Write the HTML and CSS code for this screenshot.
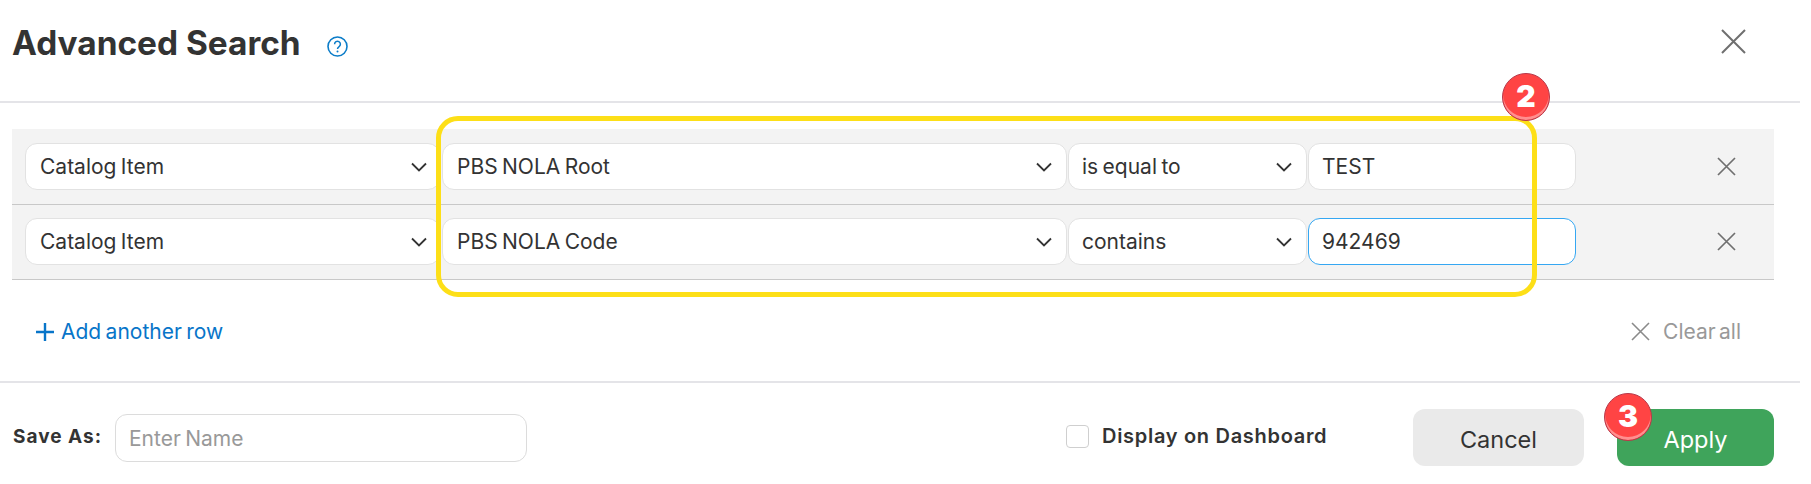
FILE: index.html
```html
<!DOCTYPE html>
<html>

<head>
  <title>Advanced Search</title>
  <link rel="stylesheet" href="styles.css">
</head>

<body>
  <div class="modal">
    <div class="header">
      <h1 class="title">Advanced Search</h1>
      <svg class="help-icon" viewBox="0 0 21 21" width="21" height="21">
        <circle cx="10.5" cy="10.5" r="9.5" fill="none" stroke="#0b7cc8" stroke-width="1.6" />
        <path d="M7.6 8.2a2.9 2.9 0 1 1 4.5 2.4c-1 .7-1.6 1.2-1.6 2.4" fill="none" stroke="#0b7cc8" stroke-width="1.5" />
        <circle cx="10.5" cy="15.6" r="1" fill="#0b7cc8" />
      </svg>
      <svg class="close-icon" viewBox="0 0 25 25" width="25" height="25">
        <path d="M1 1l23 23M24 1L1 24" stroke="#6f6f6f" stroke-width="2" fill="none" />
      </svg>
    </div>

    <div class="rows">
      <div class="row">
        <div class="select">Catalog Item
          <svg class="chevron" viewBox="0 0 16 10" width="16" height="10"><path d="M1 1.5l7 7 7-7" /></svg>
        </div>
        <div class="select">PBS NOLA Root
          <svg class="chevron" viewBox="0 0 16 10" width="16" height="10"><path d="M1 1.5l7 7 7-7" /></svg>
        </div>
        <div class="select">is equal to
          <svg class="chevron" viewBox="0 0 16 10" width="16" height="10"><path d="M1 1.5l7 7 7-7" /></svg>
        </div>
        <input class="value" type="text" value="TEST">
        <svg class="remove" viewBox="0 0 19 19" width="19" height="19"><path d="M1 1l17 17M18 1L1 18" /></svg>
      </div>
      <div class="row">
        <div class="select">Catalog Item
          <svg class="chevron" viewBox="0 0 16 10" width="16" height="10"><path d="M1 1.5l7 7 7-7" /></svg>
        </div>
        <div class="select">PBS NOLA Code
          <svg class="chevron" viewBox="0 0 16 10" width="16" height="10"><path d="M1 1.5l7 7 7-7" /></svg>
        </div>
        <div class="select">contains
          <svg class="chevron" viewBox="0 0 16 10" width="16" height="10"><path d="M1 1.5l7 7 7-7" /></svg>
        </div>
        <input class="value focused" type="text" value="942469">
        <svg class="remove" viewBox="0 0 19 19" width="19" height="19"><path d="M1 1l17 17M18 1L1 18" /></svg>
      </div>
    </div>

    <div class="row-actions">
      <a class="add-row" href="#">
        <svg viewBox="0 0 18 18" width="18" height="18"><path d="M9 0v18M0 9h18" stroke="#0875c9" stroke-width="2.4" /></svg>
        Add another row
      </a>
      <a class="clear-all" href="#">
        <svg viewBox="0 0 19 19" width="19" height="19"><path d="M1 1l17 17M18 1L1 18" stroke="#8a8a8a" stroke-width="1.6" /></svg>
        Clear all
      </a>
    </div>

    <div class="footer">
      <label class="save-label" for="saveName">Save As:</label>
      <input class="save-input" id="saveName" type="text" placeholder="Enter Name">
      <div class="dashboard-check">
        <span class="checkbox"></span>
        <span>Display on Dashboard</span>
      </div>
      <button class="btn btn-cancel">Cancel</button>
      <button class="btn btn-apply">Apply</button>
    </div>
  </div>

  <div class="highlight"></div>
  <div class="badge badge-2">2</div>
  <div class="badge badge-3">3</div>
</body>

</html>
```

FILE: styles.css
```css
* {
  box-sizing: border-box;
}

body {
  margin: 0;
  background-color: #ffffff;
  color: #333333;
  font-family: "Inter", "Liberation Sans", sans-serif;
  overflow: hidden;
}

.modal {
  width: 1800px;
  height: 484px;
}

.header {
  height: 103px;
  display: flex;
  align-items: center;
  padding: 0 54px 18px 12px;
  border-bottom: 2px solid #e4e4e8;
}

.title {
  margin: 2px 0 0 0;
  font-size: 33.4px;
  font-weight: 700;
  color: #333333;
}

.help-icon {
  margin: 10px 0 0 26px;
}

.close-icon {
  margin-left: auto;
}

.rows {
  margin: 26px 0 0 12px;
  width: 1762px;
}

.row {
  height: 75px;
  display: flex;
  align-items: flex-start;
  padding: 13px 0 0 13px;
  gap: 2px;
  background-color: #f3f3f3;
  border-bottom: 1px solid #c8c8c8;
}

.row:first-child {
  height: 76px;
  padding-top: 14px;
}

.select,
.value {
  height: 47px;
  background-color: #ffffff;
  border: 1px solid #e2e2e2;
  border-radius: 12px;
  font-family: inherit;
  font-size: 21px;
  word-spacing: -1.5px;
  color: #333333;
}

.select {
  display: flex;
  align-items: center;
  justify-content: space-between;
  padding: 0 14px 0 14px;
}

.row .select:nth-child(1) {
  width: 415px;
  padding-right: 12px;
}

.row .select:nth-child(2) {
  width: 625px;
}

.row .select:nth-child(3) {
  width: 239px;
  margin-left: -1px;
  padding-left: 13px;
}

.value {
  width: 268px;
  margin-left: -1px;
  padding: 0 13px;
  outline: none;
}

.value.focused {
  border-color: #35a7f2;
}

.chevron path {
  fill: none;
  stroke: #333333;
  stroke-width: 1.8;
}

.remove {
  margin: 14px 0 0 139px;
}

.remove path {
  fill: none;
  stroke: #6f6f6f;
  stroke-width: 1.7;
}

.row-actions {
  height: 103px;
  display: flex;
  align-items: center;
  justify-content: space-between;
  padding: 2px 59px 0 36px;
  border-bottom: 2px solid #e4e4e8;
}

.add-row,
.clear-all {
  display: flex;
  align-items: center;
  font-size: 21px;
  word-spacing: -1.5px;
  text-decoration: none;
}

.add-row {
  gap: 7px;
  color: #0875c9;
}

.clear-all {
  gap: 13px;
  word-spacing: -2.5px;
  color: #999999;
}

.footer {
  display: flex;
  align-items: center;
  height: 100px;
  padding: 8px 26px 0 13px;
}

.save-label {
  width: 102px;
  margin-bottom: 2px;
  font-size: 19px;
  font-weight: 700;
  letter-spacing: 1px;
  color: #333333;
}

.save-input {
  width: 412px;
  height: 48px;
  margin-top: 2px;
  padding: 0 13px;
  border: 1px solid #dcdcdc;
  border-radius: 12px;
  font-family: inherit;
  font-size: 21px;
  word-spacing: -1.5px;
}

.save-input::placeholder {
  color: #999999;
}

.dashboard-check {
  display: flex;
  align-items: center;
  gap: 13px;
  margin: 0 0 2px 539px;
  font-size: 20px;
  font-weight: 600;
  letter-spacing: 0.7px;
}

.checkbox {
  width: 23px;
  height: 23px;
  border: 1px solid #cfcfcf;
  border-radius: 4px;
}

.btn {
  height: 57px;
  padding-top: 5px;
  border: none;
  border-radius: 12px;
  font-family: inherit;
  font-size: 23.5px;
}

.btn-cancel {
  width: 171px;
  margin-left: auto;
  background-color: #eaeaea;
  color: #333333;
}

.btn-apply {
  width: 157px;
  margin-left: 33px;
  background-color: #3fa45b;
  color: #ffffff;
}

/* annotations drawn over the form */
.highlight {
  position: absolute;
  left: 436px;
  top: 116px;
  width: 1101px;
  height: 181px;
  border: 5px solid #fddf17;
  border-radius: 22px;
}

.badge {
  position: absolute;
  width: 48px;
  height: 48px;
  border-radius: 50%;
  background-color: #ff4444;
  border: 1px solid #b8394a;
  box-shadow: inset 0 -3px 0 #ff8f8f;
  color: #ffffff;
  font-family: "Inter", sans-serif;
  font-weight: 900;
  font-size: 30px;
  text-align: center;
  line-height: 45px;
}

.badge-2 {
  left: 1502px;
  top: 73px;
}

.badge-3 {
  left: 1604px;
  top: 393px;
}
```
